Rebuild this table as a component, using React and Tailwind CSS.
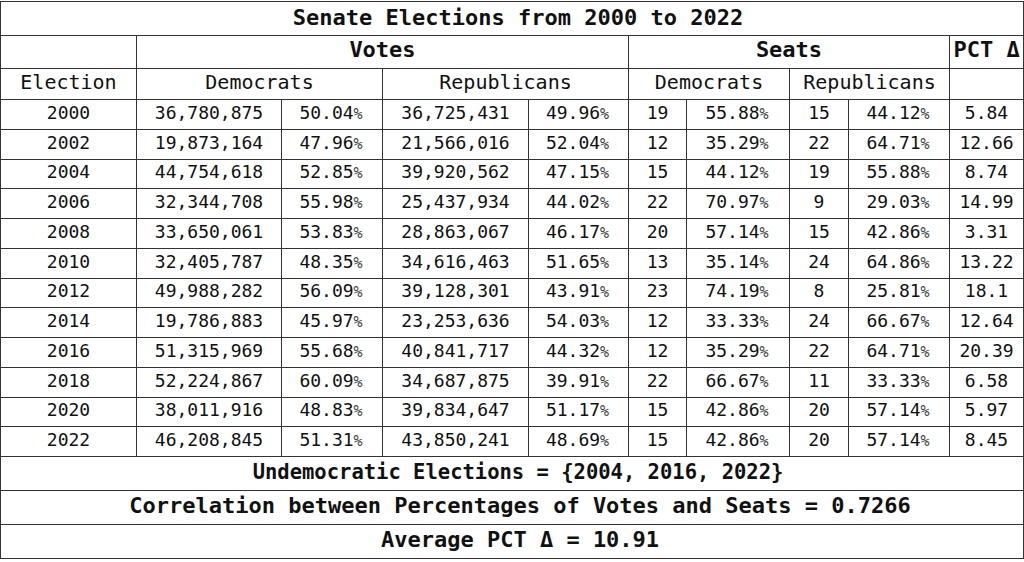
const rows = [
  ['2000', '36,780,875', '50.04%', '36,725,431', '49.96%', '19', '55.88%', '15', '44.12%', '5.84'],
  ['2002', '19,873,164', '47.96%', '21,566,016', '52.04%', '12', '35.29%', '22', '64.71%', '12.66'],
  ['2004', '44,754,618', '52.85%', '39,920,562', '47.15%', '15', '44.12%', '19', '55.88%', '8.74'],
  ['2006', '32,344,708', '55.98%', '25,437,934', '44.02%', '22', '70.97%', '9', '29.03%', '14.99'],
  ['2008', '33,650,061', '53.83%', '28,863,067', '46.17%', '20', '57.14%', '15', '42.86%', '3.31'],
  ['2010', '32,405,787', '48.35%', '34,616,463', '51.65%', '13', '35.14%', '24', '64.86%', '13.22'],
  ['2012', '49,988,282', '56.09%', '39,128,301', '43.91%', '23', '74.19%', '8', '25.81%', '18.1'],
  ['2014', '19,786,883', '45.97%', '23,253,636', '54.03%', '12', '33.33%', '24', '66.67%', '12.64'],
  ['2016', '51,315,969', '55.68%', '40,841,717', '44.32%', '12', '35.29%', '22', '64.71%', '20.39'],
  ['2018', '52,224,867', '60.09%', '34,687,875', '39.91%', '22', '66.67%', '11', '33.33%', '6.58'],
  ['2020', '38,011,916', '48.83%', '39,834,647', '51.17%', '15', '42.86%', '20', '57.14%', '5.97'],
  ['2022', '46,208,845', '51.31%', '43,850,241', '48.69%', '15', '42.86%', '20', '57.14%', '8.45'],
]

const widths = ['w-[136px]', 'w-[145px]', 'w-[101px]', 'w-[146px]', 'w-[100px]', 'w-[58px]', 'w-[103px]', 'w-[59px]', 'w-[101px]', 'w-[74px]']

const cell = 'border border-[#333] text-center p-0 leading-none'

export default function App() {
  return (
    <div className="bg-white w-[1024px] h-[562px] pt-[1px] text-[#111]" style={{ fontFamily: '"DejaVu Sans Mono", monospace' }}>
      <table className="table-fixed border-collapse w-[1023px]">
        <colgroup>
          {widths.map((w, i) => <col key={i} className={w} />)}
        </colgroup>
        <tbody>
          {/* Title */}
          <tr className="h-[34px]">
            <td colSpan={10} className={`${cell} pl-3 pb-[2px] font-bold text-[22px]`}>Senate Elections from 2000 to 2022</td>
          </tr>
          <tr className="h-[33px]">
            <td className={cell}></td>
            <td colSpan={4} className={`${cell} pb-[4px] font-bold text-[22px]`}>Votes</td>
            <td colSpan={4} className={`${cell} pb-[4px] font-bold text-[22px]`}>Seats</td>
            <td className={`${cell} pb-[4px] font-bold text-[22px] whitespace-nowrap`}>PCT Δ</td>
          </tr>
          <tr className="h-[31px] text-[20px]">
            <td className={`${cell} pb-[4px]`}>Election</td>
            <td colSpan={2} className={`${cell} pb-[4px]`}>Democrats</td>
            <td colSpan={2} className={`${cell} pb-[4px]`}>Republicans</td>
            <td colSpan={2} className={`${cell} pb-[4px]`}>Democrats</td>
            <td colSpan={2} className={`${cell} pb-[4px]`}>Republicans</td>
            <td className={cell}></td>
          </tr>

          {/* Data rows */}
          {rows.map((r) => (
            <tr key={r[0]} className="h-[29.75px] text-[18px]">
              {r.map((v, i) => (
                <td key={i} className={`${cell} pb-[3px]`}>
                  {v.endsWith('%') ? (
                    <>{v.slice(0, -1)}<span className="inline-block w-[11px] text-left text-[15px] text-[#444]">%</span></>
                  ) : v}
                </td>
              ))}
            </tr>
          ))}

          {/* Summary */}
          <tr className="h-[34px]">
            <td colSpan={10} className={`${cell} pl-3 pb-[3px] font-bold text-[20.5px]`}>Undemocratic Elections = {'{'}2004, 2016, 2022{'}'}</td>
          </tr>
          <tr className="h-[34px]">
            <td colSpan={10} className={`${cell} pl-4 pb-[3px] font-bold text-[22px]`}>Correlation between Percentages of Votes and Seats = 0.7266</td>
          </tr>
          <tr className="h-[34px]">
            <td colSpan={10} className={`${cell} pl-4 pb-[3px] font-bold text-[22px]`}>Average PCT Δ = 10.91</td>
          </tr>
        </tbody>
      </table>
    </div>
  )
}
